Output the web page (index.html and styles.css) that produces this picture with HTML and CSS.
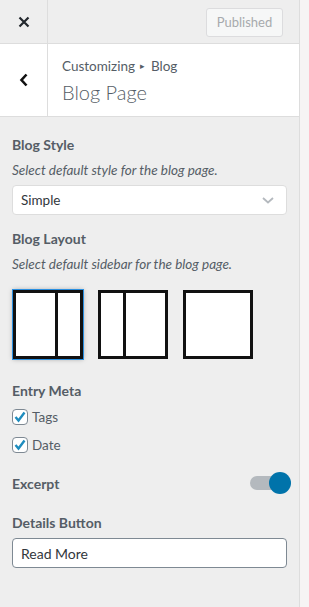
FILE: index.html
```html
<!DOCTYPE html>
<html lang="en">
<head>
    <meta charset="UTF-8">
    <meta name="viewport" content="width=device-width, initial-scale=1.0">
    <title>Customizing Blog Page</title>
    <link rel="stylesheet" href="styles.css">
</head>
<body>
    <div class="customizer">
        <!-- 상단 바 -->
        <div class="top-bar">
            <button type="button" class="close-btn" aria-label="Close">
                <svg width="12" height="12" viewBox="0 0 12 12"><path d="M1.5 1.5 L10.5 10.5 M10.5 1.5 L1.5 10.5" stroke="#23282d" stroke-width="2.2" fill="none"/></svg>
            </button>
            <div class="top-actions">
                <button type="button" class="publish-btn" disabled>Published</button>
            </div>
        </div>

        <!-- 섹션 헤더 -->
        <div class="section-head">
            <button type="button" class="back-btn" aria-label="Back">
                <svg width="10" height="14" viewBox="0 0 10 14"><path d="M7.5 1.5 L2.5 7 L7.5 12.5" stroke="#111" stroke-width="2.6" fill="none"/></svg>
            </button>
            <div class="section-title">
                <span class="crumb">Customizing <span class="crumb-sep">&#9656;</span> Blog</span>
                <h3>Blog Page</h3>
            </div>
        </div>

        <!-- 컨트롤 목록 -->
        <div class="controls">
            <div class="control">
                <span class="control-title">Blog Style</span>
                <span class="description">Select default style for the blog page.</span>
                <div class="select-box">
                    <span>Simple</span>
                    <svg width="12" height="7" viewBox="0 0 12 7"><path d="M1 1 L6 5.5 L11 1" stroke="#b4b9be" stroke-width="1.8" fill="none"/></svg>
                </div>
            </div>

            <div class="control">
                <span class="control-title">Blog Layout</span>
                <span class="description">Select default sidebar for the blog page.</span>
                <div class="layout-options">
                    <div class="layout-img selected">
                        <div class="col-main"></div>
                        <div class="col-side"></div>
                    </div>
                    <div class="layout-img">
                        <div class="col-side left"></div>
                        <div class="col-main"></div>
                    </div>
                    <div class="layout-img"></div>
                </div>
            </div>

            <div class="control">
                <span class="control-title">Entry Meta</span>
                <div class="check-list">
                    <label class="check-row"><span class="check-box"><svg width="14" height="14" viewBox="0 0 14 14"><path d="M2.5 7 L5.5 10.5 L11.5 2.5" stroke="#1e8cbe" stroke-width="2.4" fill="none"/></svg></span>Tags</label>
                    <label class="check-row"><span class="check-box"><svg width="14" height="14" viewBox="0 0 14 14"><path d="M2.5 7 L5.5 10.5 L11.5 2.5" stroke="#1e8cbe" stroke-width="2.4" fill="none"/></svg></span>Date</label>
                </div>
            </div>

            <div class="control toggle-row">
                <span class="control-title">Excerpt</span>
                <span class="toggle"><span class="track"></span><span class="knob"></span></span>
            </div>

            <div class="control">
                <span class="control-title">Details Button</span>
                <div class="text-input">Read More</div>
            </div>
        </div>
    </div>
</body>
</html>
```

FILE: styles.css
```css
/* 기본 */
body {
    margin: 0;
    background-color: #f6f4f4;
    font-family: Lato, "Open Sans", sans-serif;
    color: #555d66;
}

.customizer {
    width: 299px;
    min-height: 607px;
    background-color: #eee;
    border-right: 1px solid #ddd;
}

/* 상단 바 */
.top-bar {
    display: flex;
    height: 43px;
    border-bottom: 1px solid #ddd;
}

.close-btn {
    width: 48px;
    height: 43px;
    border: none;
    border-right: 1px solid #ddd;
    background: transparent;
    display: flex;
    align-items: center;
    justify-content: center;
    padding: 0;
}

.top-actions {
    flex: 1;
    display: flex;
    justify-content: flex-end;
    align-items: center;
    padding-right: 16px;
}

.publish-btn {
    width: 77px;
    height: 29px;
    margin-top: 1px;
    font-family: inherit;
    font-size: 13px;
    color: #a7aaad;
    background-color: #f6f7f7;
    border: 1px solid #dcdcde;
    border-radius: 3px;
    padding: 0;
}

/* 섹션 헤더 */
.section-head {
    display: flex;
    height: 72px;
    background-color: #fff;
    border-bottom: 1px solid #ddd;
}

.back-btn {
    width: 48px;
    border: none;
    border-right: 1px solid #ddd;
    background: transparent;
    display: flex;
    align-items: center;
    justify-content: center;
    padding: 0;
}

.section-title {
    padding: 12px 14px 0 14px;
}

.crumb {
    display: block;
    font-size: 13.5px;
    line-height: 20px;
    color: #555d66;
}

.crumb-sep {
    font-size: 9px;
    vertical-align: 2px;
    margin: 0 2px;
}

.section-title h3 {
    margin: 3px 0 0 0;
    font-size: 20px;
    font-weight: 300;
    line-height: 27px;
    color: #555d66;
}

/* 컨트롤 */
.controls {
    padding: 17px 12px 12px 12px;
}

.control {
    margin-bottom: 13px;
}

.control-title {
    display: block;
    font-size: 14px;
    font-weight: 700;
    line-height: 21px;
    margin-bottom: 5px;
}

.description {
    display: block;
    font-size: 13.5px;
    font-style: italic;
    line-height: 20px;
    margin-bottom: 5px;
}

.select-box {
    display: flex;
    justify-content: space-between;
    align-items: center;
    height: 28px;
    padding: 0 12px 0 8px;
    background-color: #fff;
    border: 1px solid #ddd;
    border-radius: 4px;
    font-size: 13.5px;
    color: #32373c;
}

/* 레이아웃 이미지 */
.layout-options {
    display: flex;
    gap: 15px;
    margin-top: 16px;
    margin-bottom: 21px;
    padding-left: 1px;
}

.layout-img {
    display: flex;
    box-sizing: border-box;
    width: 70px;
    height: 69px;
    border: 3px solid #111;
    background-color: #fff;
}

.layout-img.selected {
    outline: 1px solid #2a8fe0;
    box-shadow: 0 0 5px rgba(0, 0, 0, 0.35);
}

.col-main {
    flex: 1;
}

.col-side {
    width: 22px;
    border-left: 3px solid #111;
}

.col-side.left {
    border-left: none;
    border-right: 3px solid #111;
}

/* 체크박스 */
.check-list {
    margin-top: -3px;
}

.check-row {
    display: flex;
    align-items: center;
    height: 28px;
    font-size: 13.5px;
}

.check-box {
    box-sizing: border-box;
    width: 16px;
    height: 16px;
    margin-right: 4px;
    display: flex;
    align-items: center;
    justify-content: center;
    background-color: #fff;
    border: 1px solid #7e8993;
    border-radius: 4px;
}

/* 토글 */
.toggle-row {
    display: flex;
    justify-content: space-between;
    align-items: center;
    margin-top: 6px;
    margin-bottom: 18px;
}

.toggle-row .control-title {
    margin-bottom: 0;
}

.toggle {
    position: relative;
    width: 41px;
    height: 22px;
    margin-right: -4px;
}

.track {
    position: absolute;
    left: 0;
    top: 4px;
    width: 34px;
    height: 14px;
    border-radius: 7px;
    background-color: #b4b9be;
}

.knob {
    position: absolute;
    right: 0;
    top: 0;
    width: 22px;
    height: 22px;
    border-radius: 50%;
    background-color: #0073aa;
}

/* 텍스트 입력 */
.text-input {
    display: flex;
    align-items: center;
    height: 28px;
    padding: 0 8px;
    background-color: #fff;
    border: 1px solid #7e8993;
    border-radius: 4px;
    font-size: 14px;
    color: #32373c;
}
```
